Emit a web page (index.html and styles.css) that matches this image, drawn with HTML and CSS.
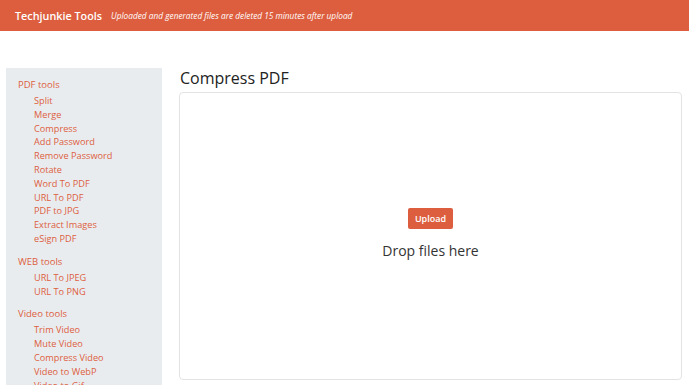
FILE: index.html
```html
<!DOCTYPE html>
<html lang="en">
<head>
<meta charset="utf-8">
<title>Compress PDF - Techjunkie Tools</title>
<link rel="stylesheet" href="styles.css">
</head>
<body>
<header class="topbar">
  <span class="brand">Techjunkie Tools</span>
  <span class="notice">Uploaded and generated files are deleted 15 minutes after upload</span>
</header>
<div class="layout">
  <nav class="sidebar">
    <div class="group">
      <a class="group-title" href="#">PDF tools</a>
      <ul class="items">
        <li><a href="#">Split</a></li>
        <li><a href="#">Merge</a></li>
        <li><a href="#">Compress</a></li>
        <li><a href="#">Add Password</a></li>
        <li><a href="#">Remove Password</a></li>
        <li><a href="#">Rotate</a></li>
        <li><a href="#">Word To PDF</a></li>
        <li><a href="#">URL To PDF</a></li>
        <li><a href="#">PDF to JPG</a></li>
        <li><a href="#">Extract Images</a></li>
        <li><a href="#">eSign PDF</a></li>
      </ul>
    </div>
    <div class="group">
      <a class="group-title" href="#">WEB tools</a>
      <ul class="items">
        <li><a href="#">URL To JPEG</a></li>
        <li><a href="#">URL To PNG</a></li>
      </ul>
    </div>
    <div class="group">
      <a class="group-title" href="#">Video tools</a>
      <ul class="items">
        <li><a href="#">Trim Video</a></li>
        <li><a href="#">Mute Video</a></li>
        <li><a href="#">Compress Video</a></li>
        <li><a href="#">Video to WebP</a></li>
        <li><a href="#">Video to Gif</a></li>
      </ul>
    </div>
  </nav>
  <main class="content">
    <h1 class="page-title">Compress PDF</h1>
    <div class="dropzone">
      <button class="upload-btn" type="button">Upload</button>
      <div class="drop-text">Drop files here</div>
    </div>
  </main>
</div>
</body>
</html>
```
FILE: styles.css
```css
* { box-sizing: border-box; }
html, body { margin: 0; padding: 0; }
body {
  font-family: "Open Sans", "Noto Sans", sans-serif;
  color: #333;
  background: #fff;
  overflow: hidden;
  height: 385px;
}
.topbar {
  height: 31px;
  background: #dd5e3e;
  display: flex;
  align-items: center;
  padding-left: 15px;
  gap: 9px;
  color: #fff;
}
.brand {
  font-size: 10.8px;
  font-weight: 600;
}
.notice {
  font-size: 8.3px;
  font-style: italic;
}
.layout {
  display: flex;
  padding: 37px 7px 0 6px;
  gap: 17px;
}
.sidebar {
  width: 156px;
  flex: none;
  background: #e9ecef;
  padding: 10px 0 0 12px;
  height: 330px;
}
.group { margin-bottom: 9px; }
.group-title {
  display: block;
  font-size: 9.5px;
  line-height: 14px;
  color: #dd5e3e;
  text-decoration: none;
  margin-bottom: 2px;
}
.items {
  list-style: none;
  margin: 0;
  padding: 0 0 0 16px;
  font-size: 9.2px;
  line-height: 13.8px;
}
.items li { height: 13.8px; }
.items a {
  color: #dd5e3e;
  text-decoration: none;
}
.content {
  flex: 1;
  display: flex;
  flex-direction: column;
}
.page-title {
  margin: 0;
  font-size: 16px;
  font-weight: 500;
  line-height: 20px;
  color: #222;
  padding-left: 1px;
  margin-bottom: 4px;
}
.dropzone {
  height: 288px;
  border: 1px solid #e3e3e3;
  border-radius: 4px;
  display: flex;
  flex-direction: column;
  align-items: center;
  justify-content: center;
  gap: 13px;
  padding-bottom: 4px;
}
.upload-btn {
  font-family: inherit;
  background: #dd5e3e;
  color: #fff;
  border: none;
  border-radius: 2px;
  font-size: 9px;
  font-weight: 600;
  height: 21px;
  padding: 0 7px;
}
.drop-text {
  font-size: 14px;
  line-height: 18px;
  color: #333;
}
```
